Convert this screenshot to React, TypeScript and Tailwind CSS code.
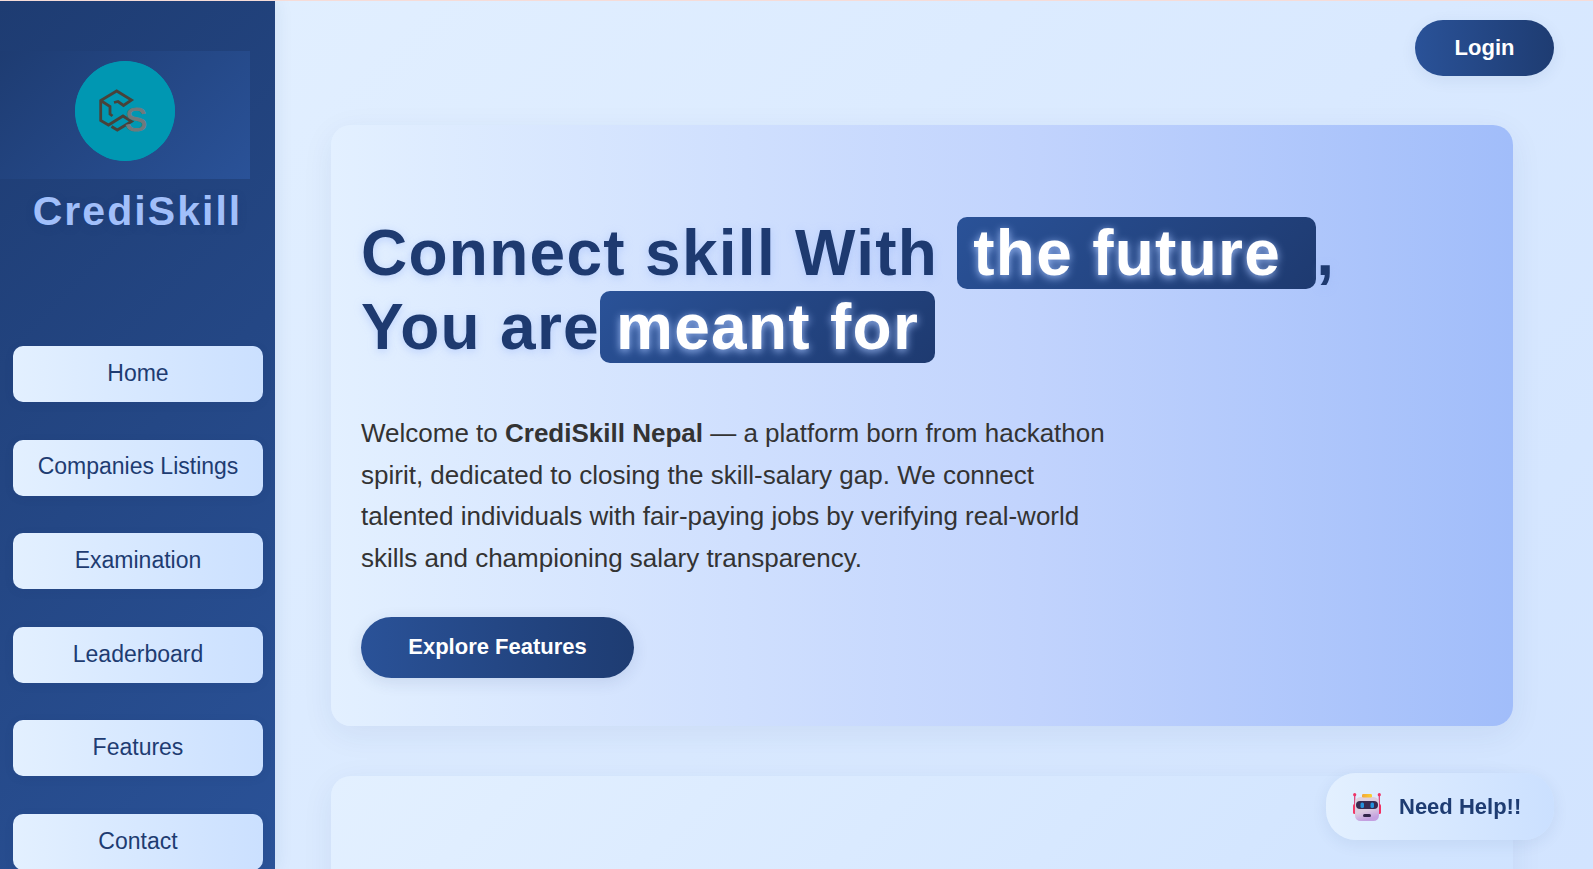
import React from "react";

const navItems = ["Home", "Companies Listings", "Examination", "Leaderboard", "Features", "Contact"];

function Logo() {
  return (
    <svg viewBox="0 0 100 100" className="size-[100px] rounded-full bg-[#0097b2]" role="img" aria-label="CrediSkill logo">
      <circle cx="50" cy="50" r="50" fill="#0097b2" />
      <path
        d="M39 41.5 L43 40.5 L48.5 44.5 L56.5 39 L41.7 30 L25.7 39.5 L25.7 59.5 L33.5 64 L48 55 L56.5 60.5 L42.3 69 L36.5 65.5 M25.7 39.5 L35 45.5 L35 53 L37.5 55"
        fill="none"
        stroke="#48423a"
        strokeWidth="2.8"
      />
      <text x="50" y="70" fill="#71797b" stroke="#71797b" strokeWidth="1" className="font-['Liberation_Sans',sans-serif] text-[33px]">
        S
      </text>
    </svg>
  );
}

function Robot() {
  return (
    <svg viewBox="0 0 28 28" className="size-7 shrink-0" aria-hidden="true">
      <defs>
        <linearGradient id="face" x1="0" y1="0" x2="0.3" y2="1">
          <stop offset="0" stopColor="#e2d3df" />
          <stop offset="0.65" stopColor="#dccbe0" />
          <stop offset="1" stopColor="#c4a0e0" />
        </linearGradient>
        <linearGradient id="hat" x1="0" y1="0" x2="1" y2="0">
          <stop offset="0" stopColor="#f3a73c" />
          <stop offset="1" stopColor="#fcd22e" />
        </linearGradient>
      </defs>
      <path d="M1.7 2v10M26.3 2v10" stroke="#d9447d" strokeWidth="1.3" />
      <circle cx="1.7" cy="1.7" r="1.6" fill="#f03467" />
      <circle cx="26.3" cy="1.7" r="1.6" fill="#f03467" />
      <rect x="0" y="11" width="4" height="10" rx="1.5" fill="#f23a68" />
      <rect x="24" y="11" width="4" height="10" rx="1.5" fill="#f22f62" />
      <rect x="2" y="4" width="24" height="24" rx="5.5" fill="url(#face)" />
      <rect x="9" y="1" width="10" height="3.5" rx="1.2" fill="url(#hat)" />
      <rect x="3" y="8" width="22" height="8" rx="4" fill="#382b50" />
      <rect x="7.5" y="9.5" width="3.5" height="5.5" rx="1.5" fill="#2491db" />
      <rect x="17.5" y="9.5" width="3.5" height="5.5" rx="1.5" fill="#2491db" />
      <rect x="10" y="21" width="8" height="3" rx="1.5" fill="#33264a" />
    </svg>
  );
}

function Mark({ children }: { children: React.ReactNode }) {
  return (
    <span className="rounded-[10px] bg-linear-135 from-[#2a5298] to-[#1e3a70] px-4 text-white [text-shadow:0_2px_8px_#a1bffa]">
      {children}
    </span>
  );
}

export default function App() {
  return (
    <div className="flex h-screen overflow-hidden border-t border-[#f6dcd8] bg-linear-135 from-[#e3f0ff] to-[#d2e4ff] font-['Liberation_Sans',Arial,sans-serif]">
      <aside className="z-10 flex h-screen w-[275px] shrink-0 flex-col bg-linear-135 from-[#1e3c72] to-[#2a5298] pt-[50px] shadow-[2px_0_16px_rgba(30,60,114,0.08)]">
        <div className="mr-[25px] flex justify-center bg-linear-135 from-[#1e3c72] to-[#2a5298] pb-[18px] pt-[10px]">
          <Logo />
        </div>
        <div className="mb-28 mt-[9px] text-center text-[41px] font-bold leading-[46px] tracking-wider text-[#a1bffa] [text-shadow:0_2px_8px_rgba(30,60,114,0.3)]">
          CrediSkill
        </div>
        <nav className="flex flex-1 flex-col justify-between px-[13px]">
          {navItems.map((item) => (
            <a
              key={item}
              href="#"
              className="flex h-14 w-[250px] shrink-0 items-center justify-center whitespace-nowrap rounded-[10px] bg-linear-90 from-[#e3f0ff] to-[#cbe0ff] pb-0.5 text-[23px] text-[#1e3c72] shadow-[0_2px_8px_rgba(30,60,114,0.12)]"
            >
              {item}
            </a>
          ))}
        </nav>
      </aside>

      <main className="min-w-0 flex-1">
        <header className="flex justify-end pr-[39px] pt-[19px]">
          <button className="h-14 w-[139px] rounded-full bg-linear-90 from-[#2a5298] to-[#1e3c72] pb-0.5 text-[22px] font-bold text-white shadow-[0_4px_16px_rgba(30,60,114,0.08)]">
            Login
          </button>
        </header>

        <div className="flex flex-col gap-[50px] pl-14 pr-20 pt-[49px]">
          <section className="rounded-[20px] bg-linear-90 from-[#e3f0ff] via-[#c1d3fd] via-60% to-[#a1bdfa] px-[30px] pb-12 pt-[91px] shadow-[0_8px_32px_rgba(30,60,114,0.07)]">
            <h1 className="text-[64px] font-bold leading-[74px] tracking-[0.02em] text-[#1e3a70] [text-shadow:0_2px_8px_rgba(161,189,250,0.6)]">
              Connect skill With <Mark>the future&nbsp;</Mark>,
              <br />
              You are<Mark>meant for</Mark>
            </h1>
            <p className="mt-[49px] max-w-[760px] text-[26px] leading-[1.6] text-[#333]">
              Welcome to <strong>CrediSkill Nepal</strong> — a platform born from hackathon spirit, dedicated to closing the
              skill-salary gap. We connect talented individuals with fair-paying jobs by verifying real-world skills and
              championing salary transparency.
            </p>
            <button className="mt-[38px] h-[61px] w-[273px] rounded-full bg-linear-90 from-[#2a5298] to-[#1e3c72] pb-0.5 text-[22px] font-bold text-white shadow-[0_4px_16px_rgba(30,60,114,0.12)]">
              Explore Features
            </button>
          </section>
          <section className="h-[400px] rounded-[20px] bg-linear-135 from-[#e3f0ff] to-[#cbe0ff] shadow-[0_8px_32px_rgba(30,60,114,0.07)]" />
        </div>
      </main>

      <button className="fixed bottom-[29px] right-[39px] z-20 flex h-[67px] w-[228px] items-center gap-[18px] rounded-[30px] bg-linear-90 from-[#e3f0ff] to-[#cbe0ff] pl-[27px] text-[22px] font-bold text-[#1e3c72] shadow-[0_4px_16px_rgba(30,60,114,0.08)]">
        <Robot />
        Need Help!!
      </button>
    </div>
  );
}
